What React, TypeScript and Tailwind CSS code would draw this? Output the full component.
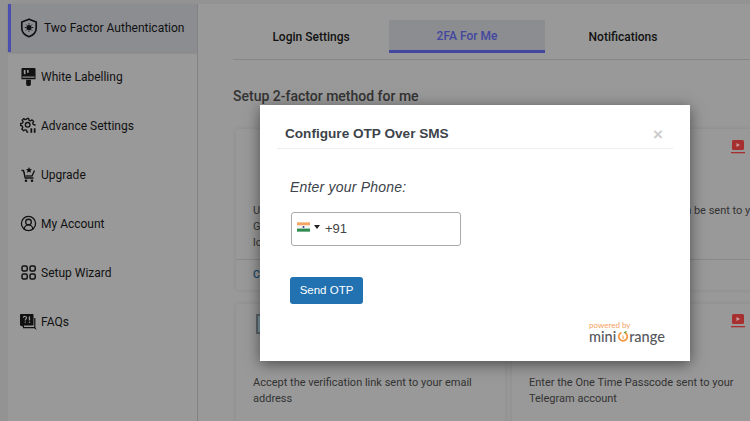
import React from 'react';
import { CircleUserRound } from 'lucide-react';

const ShieldIcon = () => (
  <svg width="18" height="20" viewBox="0 0 18 20" fill="none" stroke="#111" strokeWidth="1.7">
    <path d="M9 1.2 16.2 4v6c0 4.2-3 7.2-7.2 8.8C4.8 17.2 1.800 14.2 1.800 10V4z" strokeLinejoin="round" />
    <circle cx="9" cy="9.500" r="2.600" fill="#111" stroke="none" />
    <path d="M9 5.200v1.400M9 12.400v1.400M4.800 9.500h1.400M11.800 9.500h1.400M6 6.500l1 1M11 11.500l1 1M12 6.500l-1 1M7 11.500l-1 1" strokeWidth="1" />
  </svg>
);

const BrushIcon = () => (
  <svg width="15" height="18" viewBox="0 0 16 19" fill="#111">
    <path d="M1.500 0h13a1.200 1.200 0 0 1 1 1.200V12H.5V1.200A1.200 1.200 0 0 1 1.500 0z" />
    <rect x="3" y="2" width="1.800" height="4.500" fill="#999" />
    <rect x="6.400" y="2" width="1.800" height="3" fill="#999" />
    <rect x="1.500" y="9" width="13" height="1.200" fill="#999" />
    <path d="M5.500 12.500h5v4.600a1.800 1.800 0 0 1-1.800 1.900H7.300a1.800 1.800 0 0 1-1.800-1.900z" />
  </svg>
);

const GearBarsIcon = () => (
  <svg width="16" height="17" viewBox="0 0 24 24" fill="none" stroke="#111" strokeWidth="2" strokeLinejoin="round">
    <path d="M12.500 20.500h-2l-.6-2.600-2.200-1-2.300 1.400-2.600-2.600 1.400-2.300-.9-2.200L1 10.500v-3l2.800-.6.9-2.200-1.500-2.300 2.200-2.200 2.300 1.500 2.200-.9L11 0h2l.6 2.700 2.200.9 2.300-1.500 2.400 2.400-1.500 2.300.9 2.200 2.600.6v1.400" transform="translate(0 1.500)" />
    <circle cx="11.500" cy="11" r="3.500" />
    <path d="M17 16v7M22 16v7" strokeWidth="2.600" />
  </svg>
);

const CartStarIcon = () => (
  <svg width="15" height="16" viewBox="0 0 15 16" fill="none" stroke="#111" strokeWidth="1.300">
    <path d="M.5 3.500h2l1.700 7.500h8.300" strokeLinejoin="round" />
    <path d="M3 6h1M11 9l2.500-5.500" />
    <path d="M4.500 9h7" />
    <circle cx="5" cy="13.800" r="1.300" fill="#111" stroke="none" />
    <circle cx="11" cy="13.800" r="1.300" fill="#111" stroke="none" />
    <path d="m8 0 .9 1.900 2.100.3-1.500 1.400.4 2L8 4.700l-1.900 1 .4-2L5 2.200l2.100-.3z" fill="#111" stroke="none" />
  </svg>
);

const GridIcon = () => (
  <svg width="15" height="15" viewBox="0 0 15 15" fill="none" stroke="#111" strokeWidth="1.500">
    <rect x="1" y="1" width="5.200" height="5" rx="1.500" />
    <rect x="9" y="1" width="5.200" height="5" rx="1.500" />
    <rect x="1" y="9" width="5.200" height="5" rx="1.500" />
    <rect x="9" y="9" width="5.200" height="5" rx="1.500" />
  </svg>
);

const FaqIcon = () => (
  <svg width="17" height="16" viewBox="0 0 17 16" fill="#111">
    <rect x="0" y="0" width="13.500" height="11.500" rx="0.800" />
    <path d="M0 11h4v2.500z" />
    <path d="M3 13h11.200V4h1.200v9.500l1.400 2.500-2.600-1.700H3z" />
    <path d="M3.200 3.600c.2-1.600 3.400-1.600 3.400.2 0 1.200-1.400 1.200-1.400 2.600" stroke="#999" strokeWidth="1.100" fill="none" />
    <rect x="4.700" y="7.600" width="1.100" height="1.200" fill="#999" />
    <rect x="8.800" y="2.400" width="1.300" height="4" fill="#999" />
    <rect x="8.800" y="7.600" width="1.300" height="1.200" fill="#999" />
  </svg>
);

const VideoIcon = () => (
  <svg width="14" height="14" viewBox="0 0 14 14" className="block">
    <rect x="1" y="0" width="12" height="10" rx="1.500" fill="#a82f2f" />
    <path d="M5.500 3 9 5l-3.500 2z" fill="#c9a0a0" />
    <rect x="0" y="12" width="14" height="1.300" fill="#a82f2f" />
  </svg>
);

const navItems = [
  { label: 'White Labelling', icon: <BrushIcon /> },
  { label: 'Advance Settings', icon: <GearBarsIcon /> },
  { label: 'Upgrade', icon: <CartStarIcon /> },
  { label: 'My Account', icon: <CircleUserRound size={17} color="#111" strokeWidth={1.800} /> },
  { label: 'Setup Wizard', icon: <GridIcon /> },
  { label: 'FAQs', icon: <FaqIcon /> },
];

const Card = ({
  text,
  height,
  monitor,
  footer,
  top,
}: {
  text: string;
  height: string;
  monitor?: boolean;
  footer?: string;
  top: string;
}) => (
  <div className={`flex flex-col rounded-[3px] bg-[#999999] shadow-[0_0_4px_rgba(0,0,0,0.1)] ${height}`}>
    <div className={`flex justify-between pl-[20px] pr-[57px] ${top}`}>
      {monitor ? (
        <div className="h-[20px] w-[22px] border-2 border-[#5d6468] bg-[#7e9aa6]" />
      ) : (
        <div />
      )}
      <VideoIcon />
    </div>
    <p className="whitespace-pre-line px-[17px] text-[11px] leading-[16px] text-[#333333]">{text}</p>
    {footer && (
      <div className="mt-auto flex h-[31px] items-center border-t border-[#888888] px-[17px] text-[10.500px] font-medium text-[#1c4566]">
        {footer}
      </div>
    )}
  </div>
);

export default function App() {
  return (
    <div className="relative flex h-[421px] w-[750px] overflow-hidden bg-[#939393] pl-2 pt-1 font-['Roboto',sans-serif]">
      {/* Sidebar */}
      <aside className="w-[189px] shrink-0 bg-[#999999]">
        <div className="flex h-[48px] items-center gap-[6px] border-l-[3px] border-[#4a4eb0] bg-[#8b8d91] pl-[9px] shadow-[0_1px_2px_rgba(0,0,0,0.15)]">
          <ShieldIcon />
          <span className="whitespace-nowrap text-[12px] text-[#111111]">Two Factor Authentication</span>
        </div>
        <nav className="flex flex-col">
          {navItems.map((item) => (
            <div key={item.label} className="flex h-[49px] items-center">
              <span className="flex w-[33px] justify-center pl-[7px]">{item.icon}</span>
              <span className="text-[12px] text-[#111111]">{item.label}</span>
            </div>
          ))}
        </nav>
      </aside>

      {/* Main */}
      <main className="flex-1 border-l border-[#828282] bg-[#999999] pl-[35px]">
        <div className="mt-[16px] flex h-[40px] border-b border-[#868686]">
          <div className="flex h-[33px] w-[156px] items-center justify-center text-[12px] font-medium text-[#111111]">
            Login Settings
          </div>
          <div className="flex h-[33px] w-[156px] items-center justify-center border-b-[3px] border-[#44479f] bg-[#8b8d91] pt-[2px] text-[12px] font-medium text-[#44479f]">
            2FA For Me
          </div>
          <div className="flex h-[33px] w-[156px] items-center justify-center text-[12px] font-medium text-[#111111]">
            Notifications
          </div>
        </div>
        <h2 className="mt-[26px] text-[14px] font-medium leading-[20px] text-[#333333]">Setup 2-factor method for me</h2>
        <div className="ml-[3px] mt-[23px] grid w-[566px] grid-cols-[269px_290px] gap-x-[7px] gap-y-[14px]">
          <Card
            top="h-[74px] pt-[11px]"
            height="h-[161px]"
            text={'Use TOTP\nGoogle Auth\nlogin code'}
            footer="Configure"
          />
          <Card
            top="h-[74px] pt-[11px]"
            height="h-[161px]"
            text="The One Time Passcode will then be sent to your phone"
            footer="Configure"
          />
          <Card
            top="h-[71px] pt-[10px]"
            height="h-[120px]"
            monitor
            text="Accept the verification link sent to your email address"
          />
          <Card
            top="h-[71px] pt-[10px]"
            height="h-[120px]"
            text={'Enter the One Time Passcode sent to your\nTelegram account'}
          />
        </div>
      </main>

      {/* Modal */}
      <div className="absolute left-[260px] top-[105px] h-[256px] w-[430px] bg-white font-['Liberation_Sans',sans-serif] shadow-[0_3px_14px_rgba(0,0,0,0.5)]">
        <div className="relative mx-[17px] mt-[15px] flex h-[29px] items-center border-b border-[#eeeeee] pb-[1px] pl-[8px]">
          <h3 className="text-[13.600px] font-bold leading-none text-[#3c434a]">Configure OTP Over SMS</h3>
          <span className="absolute right-[10px] top-[6px] text-[17px] font-bold leading-none text-[#cccccc]">×</span>
        </div>
        <div className="pl-[30px]">
          <p className="mt-[29px] text-[14px] italic leading-[18px] tracking-[0.2px] text-[#3c434a]">Enter your Phone:</p>
          <div className="ml-[1px] mt-[16px] flex h-[34px] w-[170px] items-center rounded-[3px] border border-[#aaaaaa] pl-[5px]">
            <svg width="13" height="10" viewBox="0 0 14 10" className="mb-[5px]">
              <rect width="14" height="3.400" fill="#f5a561" />
              <rect y="3.400" width="14" height="3.300" fill="#f4f4f4" />
              <rect y="6.700" width="14" height="3.300" fill="#2f8a50" />
              <circle cx="7" cy="5" r="1.100" fill="#39408f" />
            </svg>
            <span className="ml-[4px] mb-[5px] h-0 w-0 border-x-[3.500px] border-t-[4px] border-x-transparent border-t-[#222222]" />
            <span className="ml-[5px] text-[13px] text-[#444444]">+91</span>
          </div>
          <button className="mt-[31px] flex h-[27px] w-[73px] items-center justify-center rounded-[3px] bg-[#2271b1] text-[11.500px] text-white">
            Send OTP
          </button>
        </div>
        <div className="absolute left-[329px] top-[215px] font-['Lato',sans-serif]">
          <div className="text-[8px] leading-[10px] text-[#f6a15c]">powered by</div>
          <div className="flex items-center text-[14.500px] font-medium leading-[13px] text-[#55585c]">
            mini
            <svg width="12" height="13" viewBox="0 0 12 13" className="mx-[0.500px]" fill="none">
              <path d="M4.500 2.600A4.300 4.300 0 1 0 8 2.800" stroke="#f59a45" strokeWidth="1.800" />
              <path d="M6.500 3.200C7 1.600 8.500 1 10 1.200 9.600 2.600 8.200 3.400 6.500 3.200z" fill="#5fa03c" />
              <path d="M5.600 5.500h1v3.500h-1z" fill="#f59a45" />
            </svg>
            range
          </div>
        </div>
      </div>
    </div>
  );
}
